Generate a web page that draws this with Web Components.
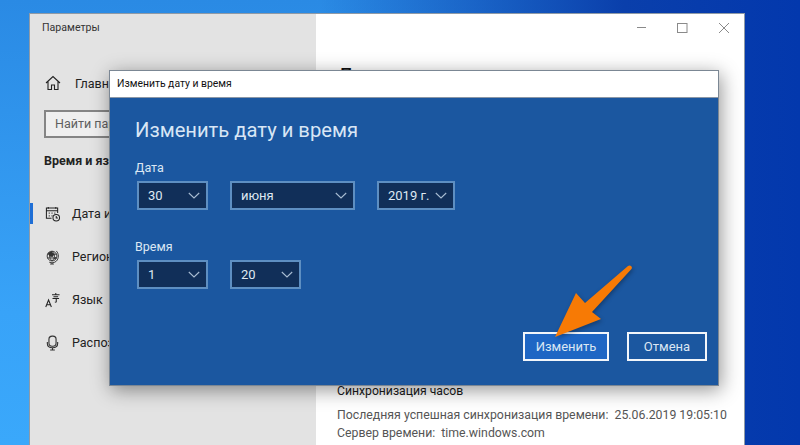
<!DOCTYPE html>
<html lang="ru">
<head>
<meta charset="utf-8">
<style>
  html, body { margin: 0; height: 100%; }
  body { font-family: Roboto, "Open Sans", sans-serif; overflow: hidden; }
</style>
</head>
<body>
<win-desktop>
  <settings-window slot="windows">
    <nav-item active label="Дата и время"><svg viewBox="0 0 16 16" fill="none" stroke="#222" stroke-width="1.1"><path d="M7 12.500H1.500v-11h12V7M1.500 4.500h12"/><path d="M3.500 .5v2M11.500 .5v2" /><path d="M4 7h1M7 7h1M10 7h1M4 10h1M7 10h1" stroke-width="1.4"/><circle cx="12" cy="12" r="3.500"/><path d="M12 10v2.200h1.800"/></svg></nav-item>
    <nav-item label="Регион"><svg viewBox="0 0 16 16" fill="none" stroke="#333" stroke-width="1"><circle cx="7.500" cy="7" r="5.200"/><path d="M2.500 5h10M2.500 9h10M7.500 1.800c-3.400 3-3.400 7.400 0 10.400M7.500 1.800c3.400 3 3.400 7.400 0 10.400"/><path d="M12 1.500c3 3 3 8 0 11-2 1.800-5 2.200-7.500 1M7.500 14v1.500M5.500 15.500h4"/><path d="M3 3.500 7 2l3 3-2 3-3-.5zM9 9l3-1-1 3z" fill="#333" stroke="none"/></svg></nav-item>
    <nav-item label="Язык"><svg viewBox="0 0 16 16" fill="none" stroke="#222" stroke-width="1.1"><path d="M.8 15.500 3.800 8l3 7.500M1.900 13h3.800"/><path d="M7.500 2.500h8M11.500 .5v2M9 4.500h5M8 6.500h7M12 6.500v3.500l-1.500.5" /></svg></nav-item>
    <nav-item label="Распознавание голоса"><svg viewBox="0 0 16 16" fill="none" stroke="#333" stroke-width="1.2"><rect x="4.200" y="0.600" width="7.600" height="10.800" rx="3.400" /><path d="M2.500 7v1.500c0 2.800 2.400 4.500 5.500 4.500s5.500-1.700 5.500-4.500V7M8 13v2.500M5.500 15.500h5"/></svg></nav-item>
  </settings-window>

  <date-dialog slot="windows" heading="Изменить дату и время">
    <field-row label="Дата">
      <drop-down width="71" value="30"></drop-down>
      <drop-down width="125" value="июня"></drop-down>
      <drop-down width="78" value="2019 г."></drop-down>
    </field-row>
    <field-row label="Время">
      <drop-down width="71" value="1"></drop-down>
      <drop-down width="71" value="20"></drop-down>
    </field-row>
    <dialog-button slot="actions" hot>Изменить</dialog-button>
    <dialog-button slot="actions">Отмена</dialog-button>
  </date-dialog>

  <callout-arrow slot="windows"></callout-arrow>
</win-desktop>

<script>
function shadowFrom (host, html) {
  host.attachShadow({ mode: 'open' }).innerHTML = html
}

class WinDesktop extends HTMLElement {
  constructor () {
    super()
    shadowFrom(this, `
      <style>
        :host {
          display: block; position: relative; width: 800px; height: 445px; overflow: hidden;
          background:
            linear-gradient(90deg, rgba(8,52,165,0) 40%, #0a3fab 78%, #0338ad 100%),
            linear-gradient(180deg, #2a8ae4 0%, #38a3f8 70%, #3aa8fb 100%);
        }
      </style>
      <slot name="windows"></slot>`)
  }
}

class SettingsWindow extends HTMLElement {
  constructor () {
    super()
    shadowFrom(this, `
      <style>
        :host {
          position: absolute; left: 29px; top: 13px; width: 716px; height: 440px;
          display: grid; grid-template-columns: 286px 1fr;
          border: 1px solid #8f9aa6; border-bottom: 0; box-sizing: border-box;
          background: #fff; color: #1a1a1a;
        }
        .side { background: #e3e3e3; display: flex; flex-direction: column; padding-left: 12px; }
        .title { font-size: 10.600px; color: #333; height: 30px; padding-top: 6px; line-height: 16px; box-sizing: border-box; }
        .home { display: flex; align-items: center; gap: 14px; margin: 27px 0 0 3px; height: 24px; font-size: 12.500px; color: #222; }
        .home svg { width: 16px; height: 16px; }
        .search {
          margin: 15px 0 0 2px; height: 28px; width: 240px; box-sizing: border-box;
          border: 2px solid #858585; background: #efefef; color: #5f5f5f;
          font-size: 12.500px; line-height: 24px; padding-left: 9px; white-space: nowrap;
        }
        h3 { margin: 14px 0 19px 2px; font-size: 12.500px; font-weight: 700; color: #222; line-height: 18px; white-space: nowrap; }
        .items { margin-left: -12px; padding-top: 3px; }
        .main { position: relative; padding: 49px 0 0 21px; display: flex; flex-direction: column; }
        .caps { position: absolute; top: -1px; right: 0; display: flex; }
        .caps svg { display: block; width: 41px; height: 28px; }
        h1 { margin: 0; font-size: 22px; font-weight: 400; line-height: 27px; color: #111; white-space: nowrap; }
        .sync { margin-top: 293px; font-size: 12.300px; line-height: 18px; white-space: nowrap; color: #555; }
        .sync b { display: block; font-weight: 400; font-size: 12.200px; line-height: 17px; color: #1a1a1a; margin-bottom: 6px; }
      </style>
      <div class="side">
        <div class="title">Параметры</div>
        <div class="home">
          <svg viewBox="0 0 16 16" fill="none" stroke="#222" stroke-width="1.1"><path d="M1 8 8 1.500 15 8M3 6.500V14.500h3.500V10h3v4.500H13V6.500"/></svg>
          <span>Главная</span>
        </div>
        <div class="search">Найти параметр</div>
        <h3>Время и язык</h3>
        <div class="items"><slot></slot></div>
      </div>
      <div class="main">
        <div class="caps">
          <svg viewBox="0 0 41 28" fill="none" stroke="#8a8a8a"><path d="M16 14.500h9"/></svg>
          <svg viewBox="0 0 41 28" fill="none" stroke="#8a8a8a"><rect x="15.500" y="10.500" width="9.500" height="9"/></svg>
          <svg viewBox="0 0 41 28" fill="none" stroke="#8a8a8a"><path d="M16 10l10 10M26 10 16 20"/></svg>
        </div>
        <h1>Дата и время</h1>
        <div class="sync">
          <b>Синхронизация часов</b>
          Последняя успешная синхронизация времени:&nbsp; 25.06.2019 19:05:10<br>
          Сервер времени:&nbsp; time.windows.com
        </div>
      </div>`)
  }
}

class NavItem extends HTMLElement {
  constructor () {
    super()
    shadowFrom(this, `
      <style>
        :host { display: flex; align-items: center; height: 43px; position: relative; font-size: 12.500px; color: #222; white-space: nowrap; }
        :host([active])::before { content: ""; position: absolute; left: 0; top: 11px; width: 3px; height: 21px; background: #1f6fd6; }
        .ic { width: 15px; height: 16px; margin: 0 12px 0 15px; flex: none; }
        ::slotted(svg) { display: block; width: 15px; height: 16px; }
      </style>
      <div class="ic"><slot></slot></div><span></span>`)
    this.shadowRoot.querySelector('span').textContent = this.getAttribute('label')
  }
}

class DateDialog extends HTMLElement {
  constructor () {
    super()
    shadowFrom(this, `
      <style>
        :host {
          position: absolute; left: 109px; top: 70px; width: 610px; height: 316px;
          display: flex; flex-direction: column; box-sizing: border-box;
          border: 1px solid #7b8794;
          box-shadow: 2px 4px 18px rgba(0,0,0,.42);
          background: #1b57a0;
        }
        .bar { height: 26px; background: #fff; border-bottom: 1px solid #8b97a6; padding-left: 7px; font-size: 10.400px; line-height: 26px; color: #111; flex: none; }
        .body { flex: 1; display: flex; flex-direction: column; padding: 0 11px 0 25px; color: #e3edf8; }
        h2 { margin: 19px 0 0 0; font-size: 20.200px; font-weight: 400; line-height: 27px; color: #d8e6f5; white-space: nowrap; }
        .fields { margin-top: 15px; display: flex; flex-direction: column; gap: 28px; }
        .actions { margin-top: auto; margin-bottom: 24px; display: flex; justify-content: flex-end; gap: 18px; }
      </style>
      <div class="bar">Изменить дату и время</div>
      <div class="body">
        <h2></h2>
        <div class="fields"><slot></slot></div>
        <div class="actions"><slot name="actions"></slot></div>
      </div>`)
    this.shadowRoot.querySelector('h2').textContent = this.getAttribute('heading')
  }
}

class FieldRow extends HTMLElement {
  constructor () {
    super()
    shadowFrom(this, `
      <style>
        :host { display: block; }
        label { display: block; font-size: 12.500px; line-height: 17px; color: #dbe7f4; margin-bottom: 5px; }
        .row { display: flex; gap: 22px; padding-left: 2px; }
      </style>
      <label></label><div class="row"><slot></slot></div>`)
    this.shadowRoot.querySelector('label').textContent = this.getAttribute('label')
  }
}

class DropDown extends HTMLElement {
  constructor () {
    super()
    shadowFrom(this, `
      <style>
        :host {
          display: flex; align-items: center; justify-content: space-between; box-sizing: border-box;
          height: 29px; border: 2px solid #5e8fc2; background: #112f59; color: #dfe8f2;
          font-size: 13px; padding: 0 6px 0 9px; white-space: nowrap;
        }
        svg { width: 12px; height: 7px; flex: none; }
      </style>
      <span></span>
      <svg viewBox="0 0 12 7" fill="none" stroke="#a9bdd3" stroke-width="1.100"><path d="M.8 1 6 6 11.200 1"/></svg>`)
    this.style.width = this.getAttribute('width') + 'px'
    this.shadowRoot.querySelector('span').textContent = this.getAttribute('value')
  }
}

class DialogButton extends HTMLElement {
  constructor () {
    super()
    shadowFrom(this, `
      <style>
        :host {
          display: flex; align-items: center; justify-content: center; box-sizing: border-box;
          height: 29px; width: 80px; border: 2px solid #f2f6fb; color: #dbe6f3; font-size: 13px; background: transparent;
        }
        :host([hot]) { width: 86px; background: #1e66c4; }
      </style>
      <slot></slot>`)
  }
}

class CalloutArrow extends HTMLElement {
  constructor () {
    super()
    shadowFrom(this, `
      <style>
        :host { position: absolute; left: 550px; top: 262px; width: 86px; height: 80px; }
        svg { display: block; filter: drop-shadow(1px 2px 2px rgba(0,0,0,.3)); }
      </style>
      <svg width="86" height="80" viewBox="0 0 86 80">
        <path d="M5 75 26 31 35 41 78 4Q80 3 81.500 4.500 82.500 6 81 7.500L42 50 51 57Z" fill="#f77a05"/>
      </svg>`)
  }
}

customElements.define('win-desktop', WinDesktop)
customElements.define('settings-window', SettingsWindow)
customElements.define('nav-item', NavItem)
customElements.define('date-dialog', DateDialog)
customElements.define('field-row', FieldRow)
customElements.define('drop-down', DropDown)
customElements.define('dialog-button', DialogButton)
customElements.define('callout-arrow', CalloutArrow)
</script>
</body>
</html>
